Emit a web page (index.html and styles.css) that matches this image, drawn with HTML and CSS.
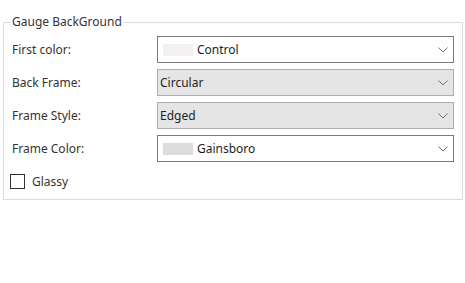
FILE: index.html
```html
<!DOCTYPE html>
<html lang="en">
<head>
    <meta charset="UTF-8">
    <meta name="viewport" content="width=device-width, initial-scale=1.0">
    <title>Gauge BackGround</title>
    <link rel="stylesheet" href="styles.css">
</head>
<body>
    <fieldset class="group">
        <legend>Gauge BackGround</legend>

        <div class="rows">
            <label class="row-label">First color:</label>
            <div class="combo combo-color">
                <span class="swatch swatch-control"></span>
                <span class="combo-text">Control</span>
                <svg class="chevron" width="10" height="6" viewBox="0 0 10 6"><polyline points="0.5,0.5 5,5 9.5,0.5" /></svg>
            </div>

            <label class="row-label">Back Frame:</label>
            <div class="combo combo-list">
                <span class="combo-text">Circular</span>
                <svg class="chevron" width="10" height="6" viewBox="0 0 10 6"><polyline points="0.5,0.5 5,5 9.5,0.5" /></svg>
            </div>

            <label class="row-label">Frame Style:</label>
            <div class="combo combo-list">
                <span class="combo-text">Edged</span>
                <svg class="chevron" width="10" height="6" viewBox="0 0 10 6"><polyline points="0.5,0.5 5,5 9.5,0.5" /></svg>
            </div>

            <label class="row-label">Frame Color:</label>
            <div class="combo combo-color">
                <span class="swatch swatch-gainsboro"></span>
                <span class="combo-text">Gainsboro</span>
                <svg class="chevron" width="10" height="6" viewBox="0 0 10 6"><polyline points="0.5,0.5 5,5 9.5,0.5" /></svg>
            </div>
        </div>

        <label class="check">
            <span class="check-box"></span>
            Glassy
        </label>
    </fieldset>
</body>
</html>
```

FILE: styles.css
```css
body {
    margin: 0;
    background-color: #ffffff;
    font-family: "Noto Sans", "Open Sans", sans-serif;
    font-size: 12px;
    color: #333333;
}

.group {
    margin: 14px 2px 0 3px;
    padding: 6px 8px 10px 8px;
    border: 1px solid #dcdcdc;
    min-width: 0;
}

.group legend {
    margin-left: -1px;
    padding: 0 1px;
    line-height: 16px;
}

.rows {
    display: grid;
    grid-template-columns: 145px 1fr;
    grid-auto-rows: 27px;
    row-gap: 6px;
}

.row-label {
    display: flex;
    align-items: center;
}

.combo {
    display: flex;
    align-items: center;
    border: 1px solid #7a7a7a;
    background-color: #ffffff;
    padding: 0 5px 0 5px;
    color: #1e1e1e;
}

.combo-list {
    border-color: #adadad;
    background-color: #e5e5e5;
    padding-left: 2px;
}

.swatch {
    width: 30px;
    height: 12px;
    margin-right: 4px;
}

.swatch-control {
    background-color: #f4eff1;
}

.swatch-gainsboro {
    background-color: #dcdcdc;
}

.chevron {
    margin-left: auto;
}

.chevron polyline {
    fill: none;
    stroke: #707070;
    stroke-width: 1;
}

.check {
    display: flex;
    align-items: center;
    gap: 7px;
    margin-top: 11px;
    margin-left: -2px;
    height: 16px;
}

.check-box {
    width: 13px;
    height: 13px;
    border: 1px solid #333333;
    background-color: #ffffff;
}
```
